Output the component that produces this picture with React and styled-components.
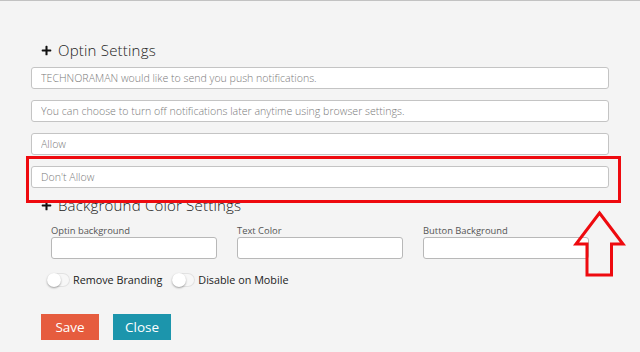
import React from 'react'
import styled, { createGlobalStyle } from 'styled-components'
import { FaPlus } from 'react-icons/fa'

const GlobalStyle = createGlobalStyle`
    html, body {
        margin: 0;
        padding: 0;
        background: #f4f4f4;
    }
    body {
        font-family: 'Open Sans', 'Noto Sans', sans-serif;
        color: #333;
    }
`

const Page = styled.div`
    position: relative;
    height: 351px;
    border-top: 1px solid #c2c2c2;
    padding: 39px 0 0 31px;
    box-sizing: border-box;
    overflow: hidden;
`

const Heading = styled.h2`
    display: flex;
    align-items: center;
    gap: 6px;
    margin: ${props => props.top}px 0 ${props => props.space}px 10px;
    height: 20px;
    font-family: 'Open Sans', sans-serif;
    font-size: 15px;
    font-weight: 300;
    color: #222;
    letter-spacing: 0.2px;
`

const PlusIcon = styled(FaPlus)`
    width: 11px;
    height: 11px;
    color: #111;
    flex: none;
`

const Fields = styled.div`
    display: flex;
    flex-direction: column;
    gap: 11px;
    width: 578px;
`

const TextInput = styled.input`
    box-sizing: border-box;
    width: 100%;
    height: 22px;
    padding: 0 9px;
    border: 1px solid #c4c4c4;
    border-radius: 3px;
    background: #fff;
    font-family: 'Open Sans', sans-serif;
    font-size: 10.6px;
    outline: none;
    &::placeholder {
        color: #7a7a7a;
        font-weight: 300;
    }
`

const ColorRow = styled.div`
    display: grid;
    grid-template-columns: repeat(3, 166px);
    column-gap: 20px;
    margin-left: 20px;
`

const ColorField = styled.label`
    display: flex;
    flex-direction: column;
    gap: 0;
    font-size: 9.4px;
    color: #555;
`

const ColorInput = styled.input`
    box-sizing: border-box;
    width: 100%;
    height: 22px;
    border: 1px solid #b8b8b8;
    border-radius: 3px;
    background: #fff;
    outline: none;
`

const Toggles = styled.div`
    display: flex;
    align-items: center;
    gap: 10px;
    margin: 13px 0 0 16px;
`

const ToggleItem = styled.label`
    display: flex;
    align-items: center;
    gap: 3px;
    font-size: 10.8px;
    color: #222;
`

const Track = styled.span`
    position: relative;
    display: inline-block;
    width: 23px;
    height: 14px;
    border-radius: 7px;
    background: #f7f7f7;
    box-shadow: inset 0 0 0 1px #e2e2e2;
`

const Knob = styled.span`
    position: absolute;
    left: 0;
    top: 0;
    width: 14px;
    height: 14px;
    border-radius: 50%;
    background: #fff;
    box-shadow: 0 1px 2px rgba(0, 0, 0, 0.35);
`

const Buttons = styled.div`
    display: flex;
    gap: 14px;
    margin: 27px 0 0 10px;
`

const Button = styled.button`
    height: 26px;
    width: ${props => props.w}px;
    border: none;
    border-radius: 0;
    background: ${props => props.bg};
    color: #fff;
    font-family: 'Open Sans', sans-serif;
    font-size: 13.5px;
    padding: 0;
`

const Highlight = styled.div`
    position: absolute;
    left: 26px;
    top: 155px;
    width: 595px;
    height: 47px;
    box-sizing: border-box;
    border: 3px solid #ee0a0f;
`

const Arrow = styled.svg`
    position: absolute;
    left: 572px;
    top: 207px;
`

export default function App() {
    return (
        <Page>
            <GlobalStyle />
            <Heading top={0} space={7}><PlusIcon />Optin Settings</Heading>
            <Fields>
                <TextInput placeholder="TECHNORAMAN would like to send you push notifications." />
                <TextInput placeholder="You can choose to turn off notifications later anytime using browser settings." />
                <TextInput placeholder="Allow" />
                <TextInput placeholder="Don't Allow" />
            </Fields>
            <Heading top={7} space={9}><PlusIcon />Background Color Settings</Heading>
            <ColorRow>
                <ColorField>Optin background<ColorInput /></ColorField>
                <ColorField>Text Color<ColorInput /></ColorField>
                <ColorField>Button Background<ColorInput /></ColorField>
            </ColorRow>
            <Toggles>
                <ToggleItem><Track><Knob /></Track>Remove Branding</ToggleItem>
                <ToggleItem><Track><Knob /></Track>Disable on Mobile</ToggleItem>
            </Toggles>
            <Buttons>
                <Button w={58} bg="#e65c3e">Save</Button>
                <Button w={58} bg="#1c95ac">Close</Button>
            </Buttons>
            <Highlight />
            <Arrow width="56" height="72" viewBox="0 0 56 72">
                <path
                    d="M27.5 5 L51 36 L39.5 36 L39.5 67 L15 67 L15 36 L4 36 Z"
                    fill="none"
                    stroke="#ee0a0f"
                    strokeWidth="3"
                    strokeLinejoin="miter"
                />
            </Arrow>
        </Page>
    )
}
